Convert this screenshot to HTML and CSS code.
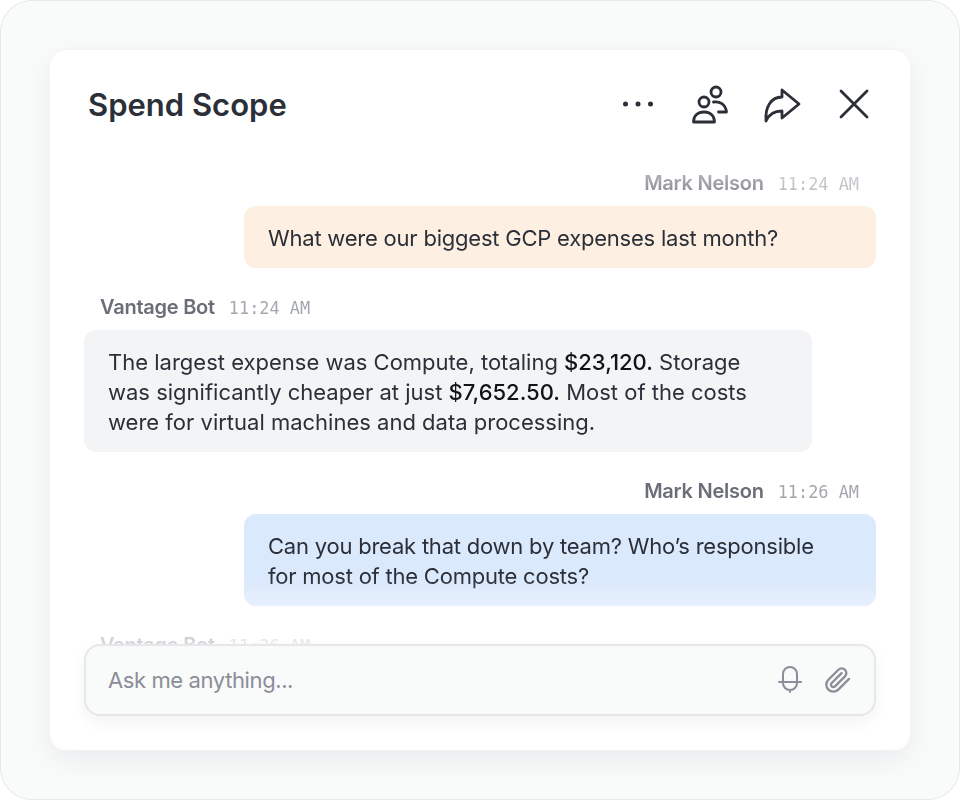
FILE: index.html
```html
<!DOCTYPE html>
<html lang="en">
<head>
  <meta charset="UTF-8" />
  <meta name="viewport" content="width=device-width, initial-scale=1.0"/>
  <title>Spend Scope</title>
  <link rel="stylesheet" href="styles.css">
</head>
<body>
  <div class="frame">
    <div class="chat-card">
      <div class="chat-header">
        <h1>Spend Scope</h1>
        <div class="header-actions">
          <svg class="icon" viewBox="0 0 40 40"><circle cx="7.5" cy="20" r="2.500" class="dot"/><circle cx="20" cy="20" r="2.500" class="dot"/><circle cx="32.5" cy="20" r="2.500" class="dot"/></svg>
          <svg class="icon" viewBox="0 0 40 40"><circle cx="14" cy="18" r="5"/><path d="M3.5 38c0-6.5 4.500-10 10.500-10s10.500 3.500 10.500 10z"/><circle cx="26" cy="8" r="5"/><path d="M23.500 18c6 -1 12 2 13 10h-8"/></svg>
          <svg class="icon" viewBox="0 0 40 40"><path d="M20 6l17 14-17 14v-7c-8 0-13 3-16 10-1-14 5-24 16-24z"/></svg>
          <svg class="icon" viewBox="0 0 40 40"><path d="M7 7l26 26M33 7L7 33"/></svg>
        </div>
      </div>

      <div class="messages">
        <div class="message mine">
          <div class="meta"><span class="name">Mark Nelson</span><span class="time">11:24 AM</span></div>
          <div class="bubble orange">What were our biggest GCP expenses last month?</div>
        </div>
        <div class="message">
          <div class="meta"><span class="name">Vantage Bot</span><span class="time">11:24 AM</span></div>
          <div class="bubble gray">The largest expense was Compute, totaling <strong>$23,120.</strong> Storage was significantly cheaper at just <strong>$7,652.50.</strong> Most of the costs were for virtual machines and data processing.</div>
        </div>
        <div class="message mine">
          <div class="meta"><span class="name">Mark Nelson</span><span class="time">11:26 AM</span></div>
          <div class="bubble blue">Can you break that down by team? Who’s responsible for most of the Compute costs?</div>
        </div>
        <div class="message">
          <div class="meta"><span class="name">Vantage Bot</span><span class="time">11:26 AM</span></div>
        </div>
      </div>

      <div class="composer">
        <span class="placeholder">Ask me anything...</span>
        <svg class="tool" viewBox="0 0 28 28"><path d="M7 16V8a7 7 0 0 1 14 0v8"/><path d="M3 16h22"/><path d="M7 17c0 4 3 7 7 7s7-3 7-7M14 24v2"/></svg>
        <svg class="tool" viewBox="0 0 24 24"><path d="m21.440 11.050-9.190 9.190a6 6 0 0 1-8.490-8.490l8.570-8.570A4 4 0 1 1 18 8.840l-8.590 8.570a2 2 0 0 1-2.830-2.830l8.490-8.480"/></svg>
      </div>
    </div>
  </div>
</body>
</html>
```

FILE: styles.css
```css
* {
  margin: 0;
  padding: 0;
  box-sizing: border-box;
}

html, body {
  height: 100%;
  background: #fff;
  font-family: 'Inter', sans-serif;
  font-optical-sizing: none;
}

.frame {
  height: 800px;
  padding: 48px;
  background: #f9fafa;
  border: 1px solid #e5e7eb;
  border-radius: 32px;
}

.chat-card {
  height: 702px;
  display: flex;
  flex-direction: column;
  padding: 0 34px 34px;
  background: #fff;
  border: 1px solid #f3f4f6;
  border-radius: 17px;
  box-shadow: 0 10px 30px rgba(17, 24, 39, 0.06);
}

.chat-header {
  display: flex;
  justify-content: space-between;
  align-items: center;
  height: 108px;
  padding: 0 2px 0 4px;
  flex-shrink: 0;
}

.chat-header h1 {
  font-size: 31px;
  font-weight: 600;
  color: #2b2f38;
}

.header-actions {
  display: flex;
  gap: 32px;
}

.icon {
  width: 40px;
  height: 40px;
  fill: none;
  stroke: #2b2f38;
  stroke-width: 2.800;
  stroke-linecap: round;
  stroke-linejoin: round;
}

.icon .dot {
  fill: #2b2f38;
  stroke: none;
}

.messages {
  flex: 1;
  min-height: 0;
  overflow: hidden;
  display: flex;
  flex-direction: column;
  gap: 24px;
  padding-top: 10px;
  -webkit-mask-image: linear-gradient(to bottom, rgba(0, 0, 0, 0.3) 0, #000 50px, #000 420px, rgba(0, 0, 0, 0.25) 486px);
  mask-image: linear-gradient(to bottom, rgba(0, 0, 0, 0.3) 0, #000 50px, #000 420px, rgba(0, 0, 0, 0.25) 486px);
}

.message {
  display: flex;
  flex-direction: column;
  align-items: flex-start;
  flex-shrink: 0;
}

.message.mine {
  align-items: flex-end;
}

.meta {
  display: flex;
  align-items: baseline;
  gap: 14px;
  height: 30px;
  padding: 0 17px 0 16px;
  line-height: 30px;
  color: #6b6e78;
}

.name {
  font-size: 20px;
  font-weight: 600;
  letter-spacing: -0.25px;
}

.time {
  font-family: 'DejaVu Sans Mono', monospace;
  font-size: 16.900px;
  color: #a4a7af;
}

.bubble {
  margin-top: 8px;
  padding: 17px 24px 15px;
  border-radius: 12px;
  font-size: 22px;
  line-height: 30px;
  color: #2b2f38;
}

.bubble strong {
  font-weight: 500;
  color: #111318;
}

.orange {
  width: 632px;
  background: #fdf0e2;
  letter-spacing: -0.22px;
}

.gray {
  width: 728px;
  background: #f3f4f6;
}

.blue {
  width: 632px;
  padding-right: 48px;
  background: #dbe9fd;
  letter-spacing: -0.22px;
}

.composer {
  display: flex;
  align-items: center;
  gap: 20px;
  flex-shrink: 0;
  height: 72px;
  padding: 0 22px;
  background: #f9fafa;
  border: 2px solid #e5e7eb;
  border-radius: 16px;
  box-shadow: 0 6px 16px rgba(17, 24, 39, 0.05);
}

.placeholder {
  flex: 1;
  font-size: 22px;
  letter-spacing: -0.39px;
  color: #8b8e98;
}

.tool {
  width: 28px;
  height: 28px;
  fill: none;
  stroke: #8b8e98;
  stroke-width: 2;
  stroke-linecap: round;
  stroke-linejoin: round;
}
```
